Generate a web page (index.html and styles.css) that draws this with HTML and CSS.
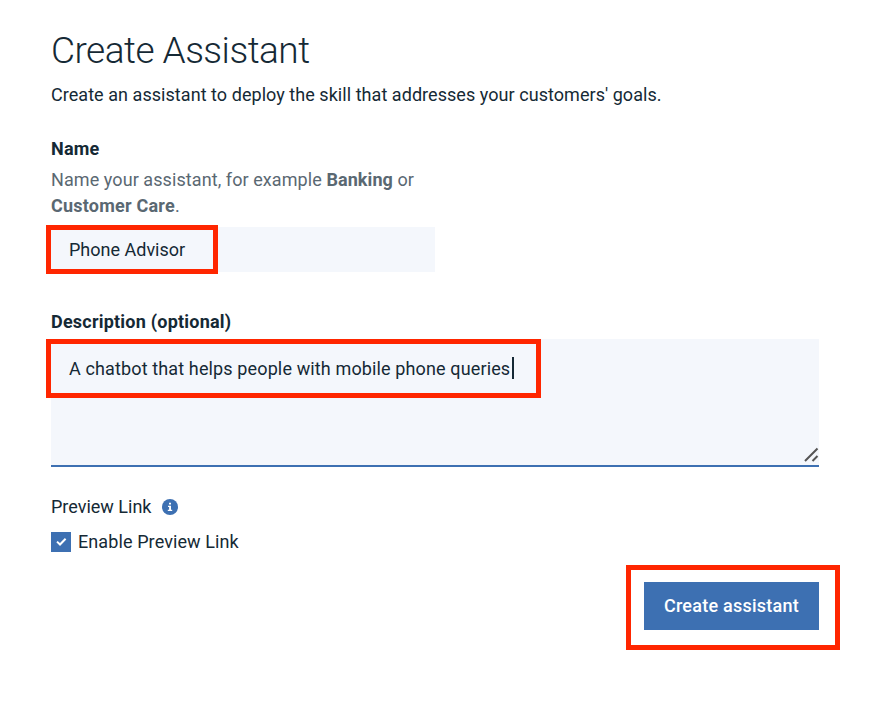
FILE: index.html
```html
<!DOCTYPE html>
<html lang="en">
<head>
<meta charset="utf-8">
<title>Create Assistant</title>
<link rel="stylesheet" href="styles.css">
</head>
<body>
<main class="page">
  <h1 class="title"><span>Create Assistant</span></h1>
  <p class="intro"><span>Create an assistant to deploy the skill that addresses your customers' goals.</span></p>
  <section class="name-group">
    <h2 class="label label-name"><span>Name</span></h2>
    <p class="help"><span class="help-a">Name your assistant, for example <b>Banking</b> or</span><br><span class="help-b"><b>Customer Care</b>.</span></p>
    <div class="input"><span class="value-name">Phone Advisor</span><i class="mark mark-name"></i></div>
  </section>
  <section class="description-group">
    <h2 class="label label-description"><span>Description (optional)</span></h2>
    <div class="textarea"><span class="value-description">A chatbot that helps people with mobile phone queries</span><i class="caret"></i>
      <svg class="grip" width="16" height="16" viewBox="0 0 16 16"><path d="M2 14 14.5 1.5M9.5 14l5-5"/></svg>
      <i class="mark mark-description"></i>
    </div>
  </section>
  <div class="preview">
    <span class="preview-text">Preview Link</span>
    <svg class="info" width="16" height="16" viewBox="0 0 16 16"><circle cx="8" cy="8" r="8"/><path d="M7 3.7h2v1.7H7zM6 6.7h3v4h1.2V12H5.8v-1.3h1.3V8H6z"/></svg>
  </div>
  <div class="check-row">
    <svg class="checkbox" width="20" height="20" viewBox="0 0 20 20"><path class="box" d="M0 0h20v20H0z"/><path class="tick" d="m6 9.6 3 2.9 5.6-5.8"/></svg>
    <span class="check-text">Enable Preview Link</span>
  </div>
  <div class="actions"><div class="button"><span class="button-text">Create assistant</span><i class="mark mark-button"></i></div></div>
</main>
</body>
</html>
```
FILE: styles.css
```css
* { box-sizing: border-box; }
body { margin: 0; background: #fff; color: #152935; font: 400 18px/26px Roboto, sans-serif; }
h1, h2, p { margin: 0; }
b { font-weight: 700; }
.page { width: 874px; height: 720px; padding: 27px 55px 0 51px; white-space: nowrap; }
.title { font-size: 37px; line-height: 48px; font-weight: 300; letter-spacing: -0.52px; }
.intro { margin-top: 7px; letter-spacing: 0.05px; }
.name-group { width: 384px; margin-top: 28px; }
.label { font-size: 18px; line-height: 26px; font-weight: 700; letter-spacing: 0.22px; }
.help { margin-top: 5px; color: #5a6872; }
.help-a { letter-spacing: 0.08px; }
.help-b { letter-spacing: 0.22px; }
.input { position: relative; height: 45px; margin-top: 8px; padding: 10px 18px; background: #f4f7fc; }
.description-group { margin-top: 37px; }
.textarea { position: relative; display: flex; height: 128px; margin-top: 4px; padding: 17px 18px; background: #f4f7fc; border-bottom: 2px solid #3d70b2; }
.value-description { letter-spacing: 0.13px; }
.caret { width: 2px; height: 22px; margin: 1px 0 0 2px; background: #152935; }
.grip { position: absolute; right: 0; bottom: 2px; fill: none; stroke: #555; stroke-width: 2; }
.mark { position: absolute; border: 5px solid #ff2600; }
.mark-name { left: -5px; top: -2px; width: 172px; height: 49px; }
.mark-description { left: -5px; top: 0; width: 495px; height: 59px; }
.mark-button { left: -18px; top: -17px; width: 214px; height: 85px; }
.preview { display: flex; align-items: center; gap: 10px; margin-top: 27px; }
.info circle { fill: #3d70b2; }
.info path { fill: #fff; }
.check-row { display: flex; align-items: center; gap: 7px; margin-top: 9px; }
.check-text { letter-spacing: 0.1px; }
.box { fill: #3d70b2; }
.tick { fill: none; stroke: #fff; stroke-width: 2; }
.actions { display: flex; justify-content: flex-end; margin-top: 27px; }
.button { position: relative; display: flex; align-items: center; justify-content: center; width: 175px; height: 48px; background: #3d70b2; color: #fff; font-weight: 500; letter-spacing: 0.25px; }
```
